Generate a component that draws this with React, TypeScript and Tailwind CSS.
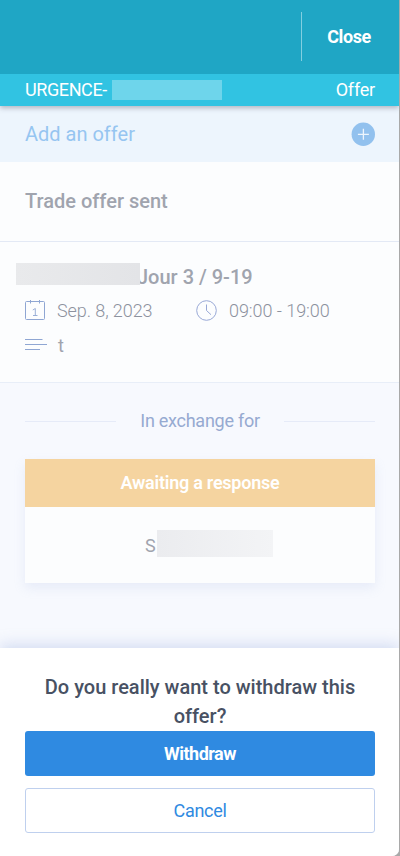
import { useState } from 'react';

interface Shift {
  title: string;
  date: string;
  hours: string;
  note: string;
}

const shift: Shift = {
  title: 'Jour 3 / 9-19',
  date: 'Sep. 8, 2023',
  hours: '09:00 - 19:00',
  note: 't',
};

function CalendarIcon() {
  return (
    <svg width="20" height="20" viewBox="0 0 20 20" fill="none" stroke="#8fa6d3" className="shrink-0">
      <rect x="0.5" y="1.5" width="19" height="18" rx="1" />
      <path d="M5.5 0v3.5M14.5 0v3.5" />
      <path d="M7.8 10L10.3 8.5V15.5M8 15.5h4.5" strokeWidth="0.9" />
    </svg>
  );
}

function ClockIcon() {
  return (
    <svg width="21" height="21" viewBox="0 0 21 21" fill="none" stroke="#98a8d6" className="shrink-0">
      <circle cx="10.5" cy="10.5" r="9.8" />
      <path d="M10.5 4.5v6l4.5 4.2" />
    </svg>
  );
}

function NoteIcon() {
  return (
    <svg width="22" height="12" viewBox="0 0 22 12" fill="none" stroke="#8fa6d3" className="shrink-0">
      <path d="M0 .5h17.5M0 5.5h22M0 10.5h15" />
    </svg>
  );
}

export default function App() {
  const [open, setOpen] = useState(true);

  return (
    <div className="w-[400px] h-[856px] bg-[#a9a9a9] pr-px overflow-hidden font-['Roboto',sans-serif] text-[18px]">
      <div className="flex flex-col h-full bg-[#f7f9fe] rounded-br-[7px] overflow-hidden">
        <header className="relative z-10 shrink-0 text-white shadow-[0_2px_5px_rgba(60,60,80,0.35)]">
          <div className="flex items-start justify-end h-[74px] bg-[#1fa6c5] pt-3">
            <button className="h-[49px] w-[98px] border-l border-[#83cfe0] pr-[3px] pb-px font-bold tracking-[-0.4px]">Close</button>
          </div>
          <div className="flex items-center justify-between h-8 bg-[#31c3e2] pl-[25px] pr-6">
            <div className="flex items-center">
              <span className="w-[87px] pb-0.5 tracking-[-0.4px]">URGENCE-</span>
              <span className="w-[110px] h-5 bg-[#6ed5eb]" />
            </div>
            <span className="pb-0.5 tracking-[-0.2px]">Offer</span>
          </div>
        </header>

        <div className="flex shrink-0 items-center justify-between h-14 bg-[#edf5fd] pl-[25px] pr-6 text-[20px] text-[#96c5f1]">
          <span>Add an offer</span>
          <svg width="24" height="24" viewBox="0 0 24 24" className="shrink-0">
            <circle cx="12.3" cy="12.3" r="11.7" fill="#92c1ee" />
            <path d="M12.4 6.8v11M6.9 12.3h11" stroke="#edf5fd" strokeWidth="1.3" />
          </svg>
        </div>

        <div className="flex shrink-0 items-center h-20 bg-[#fcfdfe] border-b border-[#e3e9f5] px-[25px] pb-0.5 text-[20px] font-medium text-[#a0a4ae]">
          Trade offer sent
        </div>

        <section className="shrink-0 h-[141px] bg-[#fcfdfe] border-b border-[#e8eef8] pt-[21px] text-[#a0a4ae]">
          <div className="flex items-start pl-4 h-[35px]">
            <span className="relative z-10 w-[124px] h-[22px] bg-linear-to-r from-[#e9eaec] to-[#e3e4e7] shrink-0" />
            <h2 className="-ml-[3px] text-[20px] leading-[28px] font-medium">{shift.title}</h2>
          </div>
          <div className="flex items-center pl-[25px] h-[24px]">
            <CalendarIcon />
            <span className="w-[139px] ml-3 font-light tracking-[-0.08px] text-[#8d929e]">{shift.date}</span>
            <ClockIcon />
            <span className="ml-3 font-light tracking-[-0.05px] text-[#8d929e]">{shift.hours}</span>
          </div>
          <div className="flex items-center pl-[25px] mt-[10px] h-[26px]">
            <NoteIcon />
            <span className="ml-[11px]">{shift.note}</span>
          </div>
        </section>

        <section className="grow pl-[25px] pr-6 pt-[26px]">
          <div className="flex items-center h-6 text-[#96aad1]">
            <span className="grow h-px bg-[#e6ebf8]" />
            <span className="px-6 pb-0.5 tracking-[-0.26px]">In exchange for</span>
            <span className="grow h-px bg-[#e6ebf8]" />
          </div>
          <div className="mt-[26px] bg-[#fcfdfe] shadow-[0_5px_11px_rgba(150,170,220,0.16)]">
            <div className="flex items-center justify-center h-12 bg-[#f5d4a0] pb-px font-semibold tracking-[-0.25px] text-white">Awaiting a response</div>
            <div className="flex items-start h-[76px] pt-[23px] pl-[120px]">
              <span className="w-3 leading-[32px] text-[#a0a4ae]">S</span>
              <span className="w-[116px] h-[27px] bg-linear-to-r from-[#ebecef] to-[#f3f4f6]" />
            </div>
          </div>
        </section>

        {open && (
          <div className="shrink-0 h-[208px] bg-white pl-[25px] pr-6 pt-[25px] shadow-[0_-3px_14px_rgba(150,170,220,0.38)]">
            <p className="text-center text-[20px] leading-[29px] font-medium text-[#485163]">Do you really want to withdraw this offer?</p>
            <button className="block w-full h-[45px] rounded-[3px] bg-[#2f8ae1] font-bold tracking-[-0.5px] text-white">Withdraw</button>
            <button className="block w-full h-[45px] mt-3 rounded-[3px] border border-[#bfd0ee] tracking-[-0.3px] text-[#2f8ae1]" onClick={() => setOpen(false)}>Cancel</button>
          </div>
        )}
      </div>
    </div>
  );
}
